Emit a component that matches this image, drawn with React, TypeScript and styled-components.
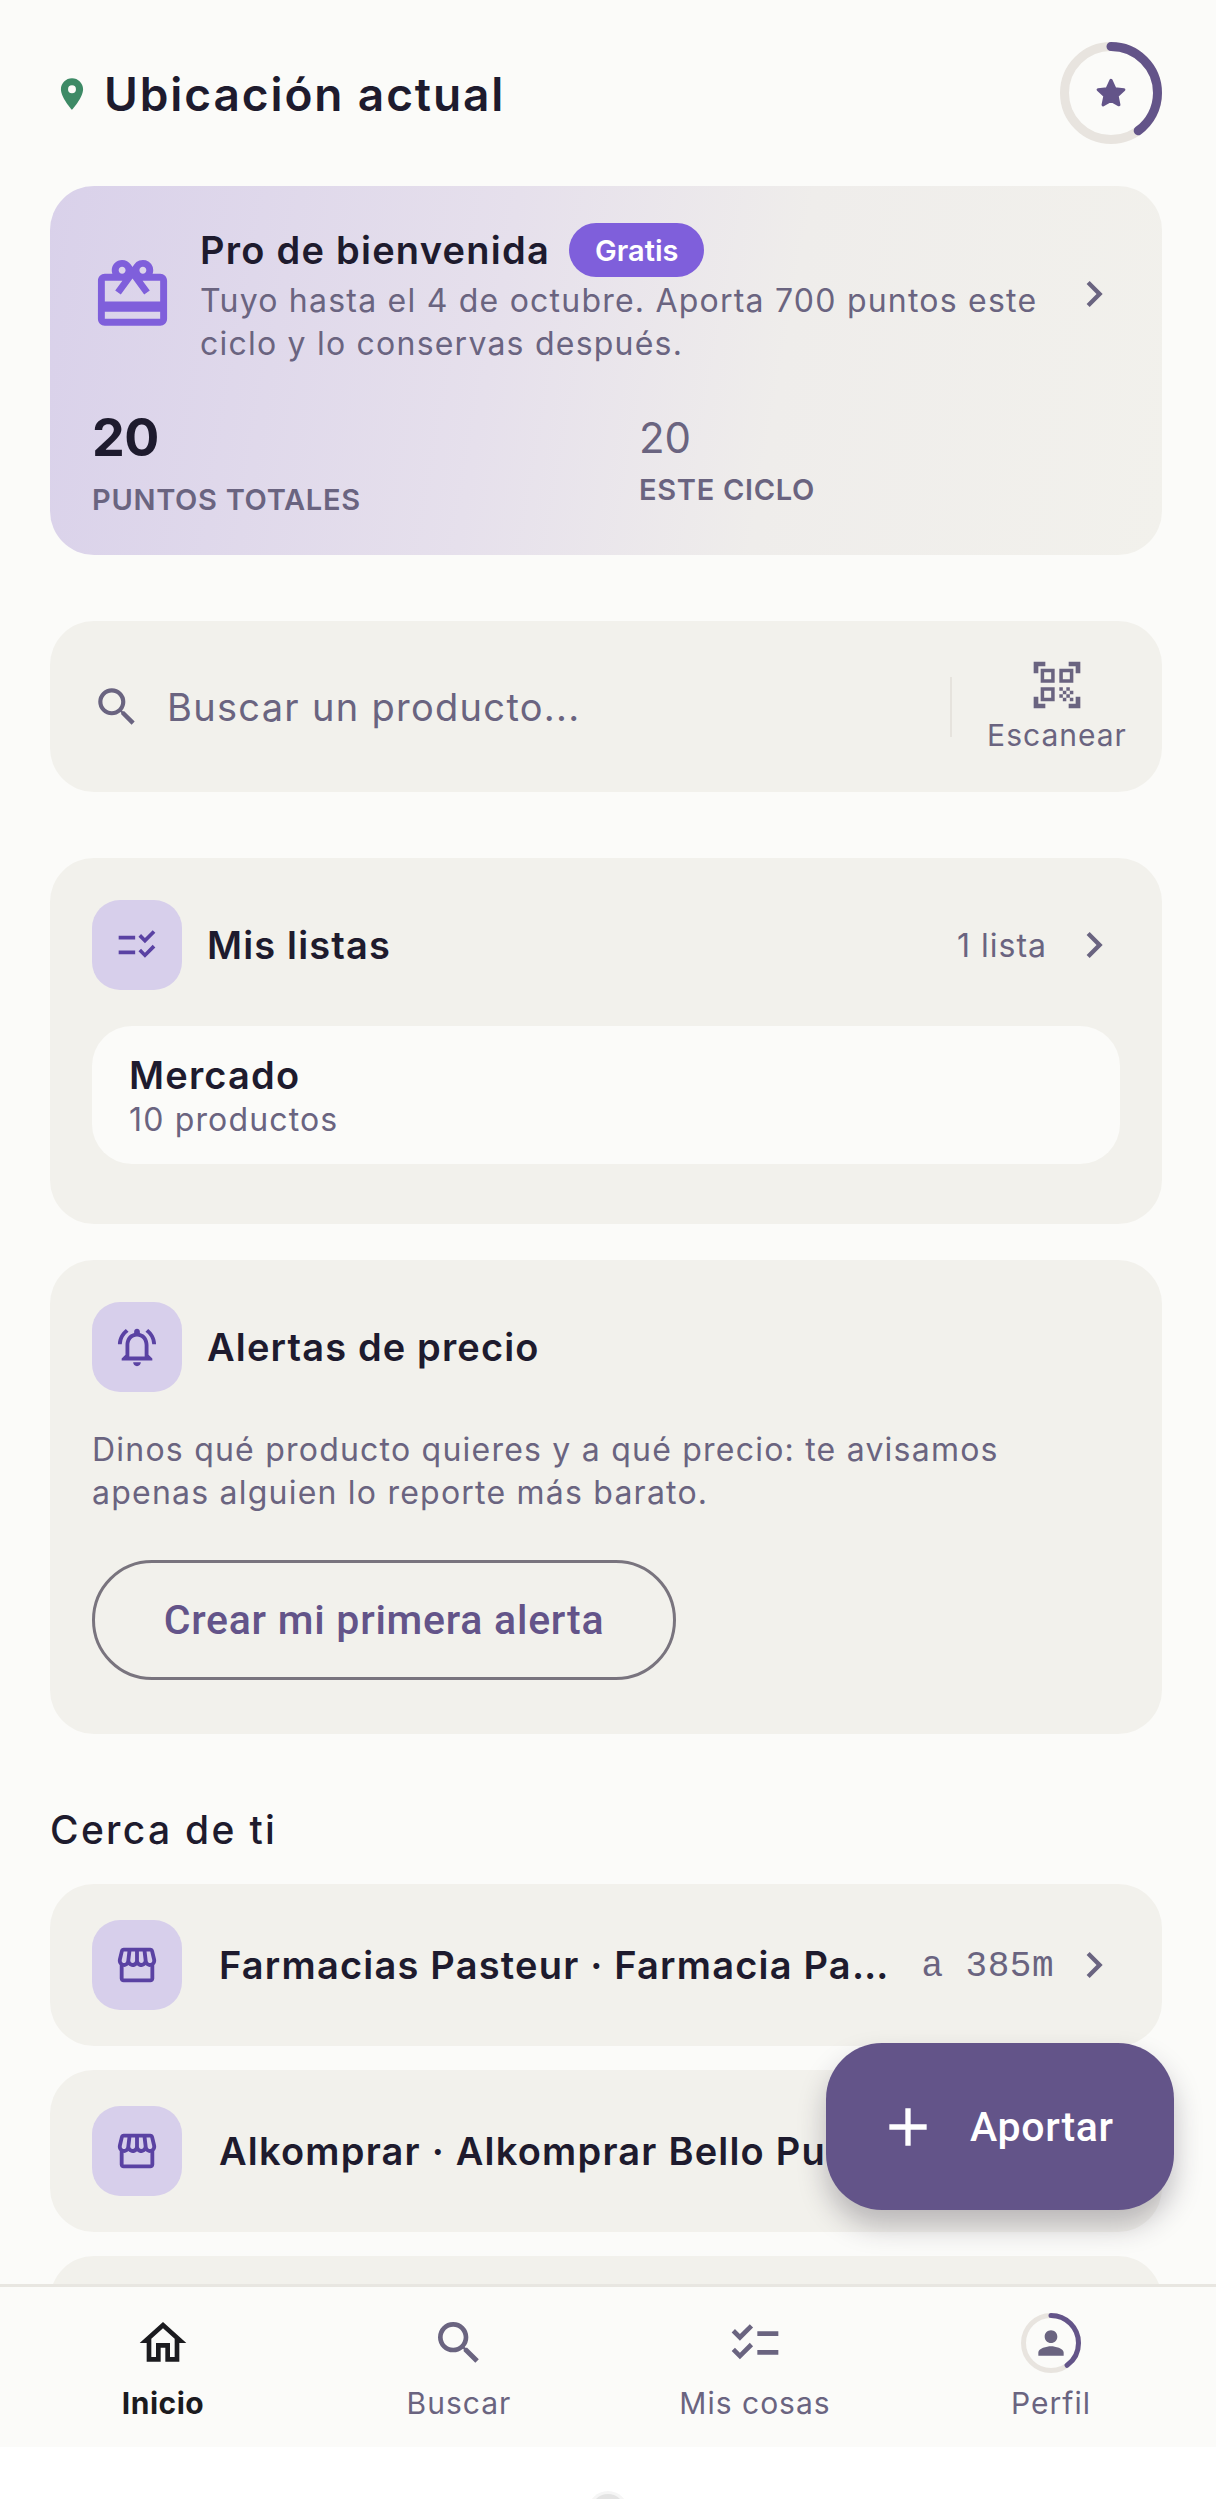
import React from 'react';
import styled, { createGlobalStyle } from 'styled-components';
import {
  MdLocationOn,
  MdOutlineCardGiftcard,
  MdSearch,
  MdOutlineQrCodeScanner,
  MdChecklist,
  MdChecklistRtl,
  MdOutlineNotificationsActive,
  MdOutlineStorefront,
  MdChevronRight,
  MdAdd,
  MdOutlineHome,
  MdPerson,
} from 'react-icons/md';

const INK = '#1e1b2e';
const MUTED = '#6a6480';
const PURPLE = '#635489';
const DEEP = '#5a42a3';
const VIOLET = '#7f5fdb';
const CARD = '#f2f1ec';
const PAGE = '#fbfbf9';
const TINT = '#d7cfeb';
const TRACK = '#e8e4df';

const GlobalStyle = createGlobalStyle`
  html, body {
    margin: 0;
    padding: 0;
    background: #fff;
  }
  body {
    font-family: Inter, "Noto Sans", sans-serif;
    color: ${INK};
  }
  * {
    box-sizing: border-box;
  }
`;

const Screen = styled.div`
  position: relative;
  width: 1216px;
  height: 2499px;
  display: flex;
  flex-direction: column;
  overflow: hidden;
  background: #fff;
`;

const Scroll = styled.main`
  flex: 1;
  min-height: 0;
  overflow: hidden;
  padding: 42px 54px 0 50px;
  background: ${PAGE};
`;

const Header = styled.header`
  display: flex;
  align-items: center;
  justify-content: space-between;
  height: 102px;
  margin-bottom: 42px;
`;

const Location = styled.div`
  display: flex;
  align-items: center;
  color: #3d8a66;
  margin-left: 3px;
  margin-top: 2px;
`;

const Title = styled.h1`
  margin: 0 0 0 13px;
  font-family: Inter, sans-serif;
  font-size: 46px;
  font-weight: 600;
  letter-spacing: 1.9px;
  color: ${INK};
`;

const RingWrap = styled.div<{ $size: number }>`
  position: relative;
  width: ${(p) => p.$size}px;
  height: ${(p) => p.$size}px;
  display: flex;
  align-items: center;
  justify-content: center;
  flex-shrink: 0;
`;

const RingSvg = styled.svg`
  position: absolute;
  inset: 0;
`;

const PromoCard = styled.section`
  height: 369px;
  border-radius: 44px;
  padding: 37px 42px 0;
  background: linear-gradient(100deg, #d9d1ea 0%, #e6e0ec 40%, #efedeb 65%, ${CARD} 100%);
`;

const PromoTop = styled.div`
  display: flex;
  align-items: center;
`;

const GiftSlot = styled.div`
  width: 109px;
  margin-left: -1px;
  color: ${VIOLET};
  display: flex;
`;

const PromoText = styled.div`
  flex: 1;
`;

const PromoHeading = styled.div`
  display: flex;
  align-items: center;
  gap: 19px;
  height: 54px;
  margin-bottom: 2px;
`;

const PromoTitle = styled.span`
  font-size: 38px;
  font-weight: 600;
  letter-spacing: 1.25px;
`;

const Pill = styled.span`
  height: 54px;
  padding: 0 26px;
  border-radius: 27px;
  background: ${VIOLET};
  color: #fff;
  font-size: 29px;
  font-weight: 600;
  display: flex;
  align-items: center;
`;

const Body = styled.p`
  margin: 0;
  font-size: 32px;
  line-height: 43px;
  letter-spacing: 1.22px;
  color: ${MUTED};
`;

const Chevron = styled.div`
  display: flex;
  color: ${MUTED};
  flex-shrink: 0;
`;

const Stats = styled.div`
  display: grid;
  grid-template-columns: 547px 1fr;
  margin-top: 41px;
`;

const StatBig = styled.div`
  font-size: 52px;
  font-weight: 700;
  line-height: 64px;
  letter-spacing: -0.5px;
`;

const StatSmall = styled.div`
  font-size: 42px;
  font-weight: 400;
  line-height: 64px;
  color: ${MUTED};
`;

const StatLabel = styled.div<{ $top: number }>`
  margin-top: ${(p) => p.$top}px;
  font-size: 29px;
  font-weight: 600;
  line-height: 36px;
  letter-spacing: 0.7px;
  color: ${MUTED};
`;

const SearchCard = styled.section`
  height: 171px;
  margin-top: 66px;
  border-radius: 44px;
  background: ${CARD};
  display: flex;
  align-items: center;
  padding: 0 36px 0 42px;
  color: ${MUTED};
`;

const SearchLabel = styled.span`
  flex: 1;
  margin-left: 25px;
  font-size: 38px;
  letter-spacing: 1.3px;
`;

const Divider = styled.div`
  width: 2px;
  height: 60px;
  background: #e6e3dd;
`;

const Scan = styled.div`
  width: 210px;
  margin-right: -36px;
  margin-top: -3px;
  display: flex;
  flex-direction: column;
  align-items: center;
  gap: 4px;
  font-size: 30px;
  letter-spacing: 1px;
`;

const Panel = styled.section<{ $top: number; $height: number }>`
  height: ${(p) => p.$height}px;
  margin-top: ${(p) => p.$top}px;
  border-radius: 44px;
  background: ${CARD};
  padding: 42px;
`;

const PanelHead = styled.div`
  display: flex;
  align-items: center;
`;

const IconBox = styled.div`
  width: 90px;
  height: 90px;
  border-radius: 28px;
  background: ${TINT};
  color: ${DEEP};
  display: flex;
  align-items: center;
  justify-content: center;
  flex-shrink: 0;
`;

const PanelTitle = styled.h2`
  flex: 1;
  margin: 0 0 0 25px;
  font-size: 38px;
  font-weight: 600;
  letter-spacing: 1.15px;
`;

const Count = styled.span`
  font-size: 32px;
  letter-spacing: 1px;
  color: ${MUTED};
  margin-right: 21px;
`;

const ListItem = styled.div`
  margin-top: 36px;
  height: 138px;
  border-radius: 40px;
  background: ${PAGE};
  padding: 24px 37px;
`;

const ItemName = styled.div`
  font-size: 38px;
  font-weight: 600;
  line-height: 50px;
  letter-spacing: 1.2px;
`;

const ItemMeta = styled.div`
  font-size: 32px;
  line-height: 40px;
  letter-spacing: 1.15px;
  color: ${MUTED};
`;

const AlertCopy = styled(Body)`
  margin-top: 36px;
`;

const OutlineButton = styled.button`
  display: block;
  width: 584px;
  height: 120px;
  margin-top: 46px;
  border: 3px solid #79747e;
  border-radius: 60px;
  background: transparent;
  font-family: Roboto, sans-serif;
  font-size: 41px;
  font-weight: 500;
  letter-spacing: 0.75px;
  color: ${PURPLE};
`;

const SectionTitle = styled.h3`
  margin: 69px 0 0;
  height: 54px;
  font-family: Inter, sans-serif;
  font-size: 39px;
  line-height: 54px;
  font-weight: 500;
  letter-spacing: 2.3px;
`;

const StoreRow = styled.div`
  height: 162px;
  margin-top: 24px;
  border-radius: 44px;
  background: ${CARD};
  display: flex;
  align-items: center;
  padding: 0 42px;
`;

const StoreRowFirst = styled(StoreRow)`
  margin-top: 27px;
`;

const StoreName = styled.span`
  flex: 1;
  min-width: 0;
  margin: 0 30px 0 37px;
  font-size: 38px;
  font-weight: 600;
  letter-spacing: 1.2px;
  white-space: nowrap;
  overflow: hidden;
  text-overflow: ellipsis;
`;

const Distance = styled.span`
  font-family: "Liberation Mono", monospace;
  font-size: 36px;
  letter-spacing: 0.5px;
  color: ${MUTED};
  margin-right: 14px;
  margin-top: 3px;
  white-space: pre;
`;

const Fab = styled.button`
  position: absolute;
  left: 826px;
  top: 2043px;
  width: 348px;
  height: 167px;
  border: none;
  border-radius: 56px;
  background: ${PURPLE};
  color: #fff;
  display: flex;
  align-items: center;
  padding: 0 0 0 50px;
  gap: 30px;
  font-family: Roboto, sans-serif;
  font-size: 41px;
  font-weight: 500;
  letter-spacing: 0.7px;
  box-shadow: 0 16px 28px rgba(40, 34, 50, 0.28);
`;

const BottomNav = styled.nav`
  height: 163px;
  flex-shrink: 0;
  border-top: 3px solid #e8e6e1;
  background: ${PAGE};
  display: grid;
  grid-template-columns: repeat(4, 296px);
  padding: 0 17px 0 15px;
  position: relative;
  z-index: 1;
`;

const NavItem = styled.div<{ $active?: boolean }>`
  display: flex;
  flex-direction: column;
  align-items: center;
  color: ${(p) => (p.$active ? '#1b1b1f' : MUTED)};
  font-size: 30px;
  font-weight: ${(p) => (p.$active ? 700 : 400)};
  letter-spacing: ${(p) => (p.$active ? '0.5px' : '1px')};
`;

const NavIcon = styled.div`
  height: 60px;
  margin-top: 26px;
  margin-bottom: 12px;
  display: flex;
  align-items: center;
  justify-content: center;
`;

const GestureArea = styled.div`
  height: 52px;
  flex-shrink: 0;
  background: #fff;
  display: flex;
  justify-content: center;
  padding-top: 47px;
  overflow: hidden;
`;

const GestureDot = styled.div`
  width: 34px;
  height: 34px;
  border-radius: 50%;
  background: #e3e3e3;
  box-shadow: 0 0 0 3px #f5f5f5;
`;

function Star({ size }: { size: number }) {
  return (
    <svg width={size} height={size} viewBox="0 0 24 24" fill={PURPLE} stroke={PURPLE} strokeWidth="2" strokeLinejoin="round">
      <path d="M12 3.5l2.6 5.6 6 .7-4.5 4.1 1.2 6L12 17l-5.3 2.9 1.2-6L3.4 9.8l6-.7z" />
    </svg>
  );
}

function Ring({ size, stroke, children }: { size: number; stroke: number; children: React.ReactNode }) {
  const r = (size - stroke) / 2;
  const c = 2 * Math.PI * r;
  return (
    <RingWrap $size={size}>
      <RingSvg width={size} height={size} viewBox={`0 0 ${size} ${size}`}>
        <circle cx={size / 2} cy={size / 2} r={r} fill="none" stroke={TRACK} strokeWidth={stroke} />
        <circle
          cx={size / 2}
          cy={size / 2}
          r={r}
          fill="none"
          stroke={PURPLE}
          strokeWidth={stroke}
          strokeLinecap="round"
          strokeDasharray={`${c * 0.4} ${c}`}
          transform={`rotate(-90 ${size / 2} ${size / 2})`}
        />
      </RingSvg>
      {children}
    </RingWrap>
  );
}

function Store({ name, distance, first }: { name: string; distance: string; first?: boolean }) {
  const Row = first ? StoreRowFirst : StoreRow;
  return (
    <Row>
      <IconBox>
        <MdOutlineStorefront size={46} />
      </IconBox>
      <StoreName>{name}</StoreName>
      <Distance>{distance}</Distance>
      <Chevron>
        <MdChevronRight size={52} />
      </Chevron>
    </Row>
  );
}

export default function App() {
  return (
    <Screen>
      <GlobalStyle />
      <Scroll>
        <Header>
          <Location>
            <MdLocationOn size={38} />
            <Title>Ubicación actual</Title>
          </Location>
          <Ring size={102} stroke={9}>
            <Star size={36} />
          </Ring>
        </Header>

        <PromoCard>
          <PromoTop>
            <GiftSlot>
              <MdOutlineCardGiftcard size={83} />
            </GiftSlot>
            <PromoText>
              <PromoHeading>
                <PromoTitle>Pro de bienvenida</PromoTitle>
                <Pill>Gratis</Pill>
              </PromoHeading>
              <Body>
                Tuyo hasta el 4 de octubre. Aporta 700 puntos este
                <br />
                ciclo y lo conservas después.
              </Body>
            </PromoText>
            <Chevron>
              <MdChevronRight size={52} />
            </Chevron>
          </PromoTop>
          <Stats>
            <div>
              <StatBig>20</StatBig>
              <StatLabel $top={12}>PUNTOS TOTALES</StatLabel>
            </div>
            <div>
              <StatSmall>20</StatSmall>
              <StatLabel $top={2}>ESTE CICLO</StatLabel>
            </div>
          </Stats>
        </PromoCard>

        <SearchCard>
          <MdSearch size={50} />
          <SearchLabel>Buscar un producto...</SearchLabel>
          <Divider />
          <Scan>
            <MdOutlineQrCodeScanner size={56} />
            <span>Escanear</span>
          </Scan>
        </SearchCard>

        <Panel $top={66} $height={366}>
          <PanelHead>
            <IconBox>
              <MdChecklistRtl size={44} />
            </IconBox>
            <PanelTitle>Mis listas</PanelTitle>
            <Count>1 lista</Count>
            <Chevron>
              <MdChevronRight size={52} />
            </Chevron>
          </PanelHead>
          <ListItem>
            <ItemName>Mercado</ItemName>
            <ItemMeta>10 productos</ItemMeta>
          </ListItem>
        </Panel>

        <Panel $top={36} $height={474}>
          <PanelHead>
            <IconBox>
              <MdOutlineNotificationsActive size={46} />
            </IconBox>
            <PanelTitle>Alertas de precio</PanelTitle>
          </PanelHead>
          <AlertCopy>
            Dinos qué producto quieres y a qué precio: te avisamos
            <br />
            apenas alguien lo reporte más barato.
          </AlertCopy>
          <OutlineButton>Crear mi primera alerta</OutlineButton>
        </Panel>

        <SectionTitle>Cerca de ti</SectionTitle>
        <Store first name="Farmacias Pasteur · Farmacia Pasteur Centro" distance="a 385m" />
        <Store name="Alkomprar · Alkomprar Bello Puente" distance="a 510m" />
        <Store name="Éxito · Éxito Unicentro" distance="a 640m" />
      </Scroll>

      <Fab>
        <MdAdd size={64} />
        Aportar
      </Fab>

      <BottomNav>
        <NavItem $active>
          <NavIcon>
            <MdOutlineHome size={56} />
          </NavIcon>
          Inicio
        </NavItem>
        <NavItem>
          <NavIcon>
            <MdSearch size={56} />
          </NavIcon>
          Buscar
        </NavItem>
        <NavItem>
          <NavIcon>
            <MdChecklist size={56} />
          </NavIcon>
          Mis cosas
        </NavItem>
        <NavItem>
          <NavIcon>
            <Ring size={60} stroke={5}>
              <MdPerson size={38} />
            </Ring>
          </NavIcon>
          Perfil
        </NavItem>
      </BottomNav>
      <GestureArea>
        <GestureDot />
      </GestureArea>
    </Screen>
  );
}
